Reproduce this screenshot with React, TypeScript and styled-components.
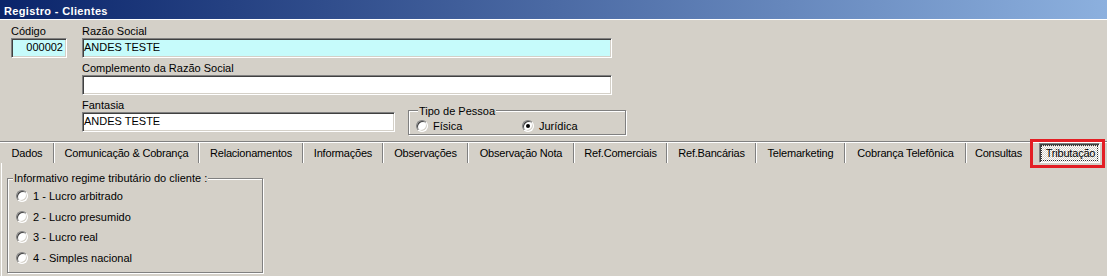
import React from "react";
import styled, { createGlobalStyle } from "styled-components";

const GlobalStyle = createGlobalStyle`
  html, body {
    margin: 0;
    padding: 0;
    background: #d4d0c8;
  }
  body {
    font-family: "Liberation Sans", Arial, sans-serif;
    font-size: 11px;
    color: #000;
  }
`;

const Window = styled.div`
  width: 1107px;
  height: 276px;
  overflow: hidden;
  background: #d4d0c8;
`;

const TitleBar = styled.div`
  height: 16px;
  padding: 3px 0 0 4px;
  border-bottom: 1px solid #fff;
  background: linear-gradient(to right, #0a246a, #8cb0de);
  color: #fff;
  font-weight: bold;
  letter-spacing: 0.35px;
  line-height: 16px;
  white-space: nowrap;
`;

const Header = styled.div`
  display: flex;
  gap: 15px;
  padding: 4px 0 6px 11px;
`;

const Column = styled.div<{ $w?: number }>`
  display: flex;
  flex-direction: column;
  gap: 3px;
  width: ${(p) => (p.$w ? `${p.$w}px` : "auto")};
`;

const Row = styled.div`
  display: flex;
  align-items: flex-start;
`;

const Field = styled.div`
  display: flex;
  flex-direction: column;
`;

const Label = styled.div`
  height: 14px;
  line-height: 14px;
  white-space: nowrap;
`;

const TextBox = styled.div<{ $w: number; $bg?: string; $right?: boolean }>`
  box-sizing: border-box;
  width: ${(p) => p.$w}px;
  height: 20px;
  padding: 0 ${(p) => (p.$right ? "3px" : "1px")} 0 1px;
  border: 1px solid;
  border-color: #808080 #fff #fff #808080;
  box-shadow: inset 1px 1px 0 #404040, inset -1px -1px 0 #d4d0c8;
  background: ${(p) => p.$bg ?? "#fff"};
  line-height: 16px;
  text-align: ${(p) => (p.$right ? "right" : "left")};
  white-space: nowrap;
  overflow: hidden;
`;

const GroupBox = styled.div<{ $w: number; $h: number; $mt?: number; $ml?: number }>`
  position: relative;
  box-sizing: border-box;
  width: ${(p) => p.$w}px;
  height: ${(p) => p.$h}px;
  margin-top: ${(p) => p.$mt ?? 0}px;
  margin-left: ${(p) => p.$ml ?? 0}px;
  border: 1px solid #808080;
  box-shadow: inset 1px 1px 0 #fff, 1px 1px 0 #fff;
`;

const Caption = styled.span<{ $top: number; $left: number }>`
  position: absolute;
  top: ${(p) => p.$top}px;
  left: ${(p) => p.$left}px;
  padding: 0 1px;
  background: #d4d0c8;
  line-height: 13px;
  white-space: nowrap;
`;

const PessoaOptions = styled.div`
  display: grid;
  grid-template-columns: 106px auto;
  padding: 9px 0 0 7px;
`;

const RegimeOptions = styled.div`
  display: flex;
  flex-direction: column;
  padding: 7px 0 0 8px;
`;

const Option = styled.div<{ $h: number }>`
  display: flex;
  align-items: center;
  gap: 5px;
  height: ${(p) => p.$h}px;
  white-space: nowrap;
`;

const RadioCircle = styled.span<{ $checked?: boolean }>`
  position: relative;
  flex: none;
  box-sizing: border-box;
  width: 12px;
  height: 12px;
  border-radius: 50%;
  border: 1px solid;
  border-color: #808080 #fff #fff #808080;
  box-shadow: inset 1px 1px 0 #404040, inset -1px -1px 0 #d4d0c8;
  background: #fff;

  &::after {
    content: "";
    display: ${(p) => (p.$checked ? "block" : "none")};
    position: absolute;
    left: 3px;
    top: 3px;
    width: 4px;
    height: 4px;
    border-radius: 50%;
    background: #000;
  }
`;

const TabBar = styled.div`
  display: flex;
  height: 20px;
  padding: 1px 0 0 1px;
  border-top: 1px solid #808080;
  box-shadow: inset 0 1px 0 #fff;
`;

const Tab = styled.div<{ $w: number }>`
  flex: none;
  width: ${(p) => p.$w}px;
  height: 20px;
  line-height: 20px;
  letter-spacing: -0.2px;
  text-align: center;
  white-space: nowrap;
`;

const TabSeparator = styled.div`
  flex: none;
  width: 2px;
  height: 20px;
  box-shadow: inset 1px 0 0 #808080, inset -1px 0 0 #fff;
`;

const ActiveTab = styled.div`
  position: relative;
  flex: none;
  display: flex;
  box-sizing: border-box;
  width: 61px;
  height: 20px;
  margin-left: 7px;
  border: 1px solid;
  border-color: #808080 #fff #fff #808080;
  box-shadow: inset 1px 1px 0 #404040;
  background-color: #fff;
  background-image: repeating-conic-gradient(#d4d0c8 0 25%, #fff 0 50%);
  background-size: 2px 2px;
`;

const FocusFrame = styled.span`
  flex: 1;
  margin: 1px;
  border: 1px dotted #303030;
  padding-left: 2px;
  line-height: 14px;
  letter-spacing: -0.2px;
  text-align: center;
  white-space: nowrap;
`;

const Highlight = styled.span`
  position: absolute;
  left: -10px;
  top: -5px;
  right: -6px;
  bottom: -6px;
  border: 3px solid #e31e24;
  pointer-events: none;
`;

const Page = styled.div`
  margin-left: 1px;
  padding: 15px 0 0 5px;
  border-left: 1px solid #fff;
  height: 200px;
`;

const tabs: { label: string; w: number }[] = [
  { label: "Dados", w: 52 },
  { label: "Comunicação & Cobrança", w: 143 },
  { label: "Relacionamentos", w: 102 },
  { label: "Informações", w: 78 },
  { label: "Observações", w: 83 },
  { label: "Observação Nota", w: 104 },
  { label: "Ref.Comerciais", w: 91 },
  { label: "Ref.Bancárias", w: 87 },
  { label: "Telemarketing", w: 87 },
  { label: "Cobrança Telefônica", w: 119 },
  { label: "Consultas", w: 63 },
];

const regimes = [
  "1 - Lucro arbitrado",
  "2 - Lucro presumido",
  "3 - Lucro real",
  "4 - Simples nacional",
];

export default function App() {
  return (
    <Window>
      <GlobalStyle />
      <TitleBar>Registro - Clientes</TitleBar>

      <Header>
        <Column $w={56}>
          <Field>
            <Label>Código</Label>
            <TextBox $w={56} $bg="#c6fbfb" $right>
              000002
            </TextBox>
          </Field>
        </Column>
        <Column>
          <Field>
            <Label>Razão Social</Label>
            <TextBox $w={530} $bg="#c6fbfb">
              ANDES TESTE
            </TextBox>
          </Field>
          <Field>
            <Label>Complemento da Razão Social</Label>
            <TextBox $w={530} />
          </Field>
          <Row>
            <Field>
              <Label>Fantasia</Label>
              <TextBox $w={313}>ANDES TESTE</TextBox>
            </Field>
            <GroupBox $w={218} $h={25} $mt={12} $ml={13}>
              <Caption $top={-6} $left={9}>
                Tipo de Pessoa
              </Caption>
              <PessoaOptions>
                <Option $h={12}>
                  <RadioCircle />
                  Física
                </Option>
                <Option $h={12}>
                  <RadioCircle $checked />
                  Jurídica
                </Option>
              </PessoaOptions>
            </GroupBox>
          </Row>
        </Column>
      </Header>

      <TabBar>
        {tabs.map((t) => (
          <React.Fragment key={t.label}>
            <Tab $w={t.w}>{t.label}</Tab>
            <TabSeparator />
          </React.Fragment>
        ))}
        <ActiveTab>
          <FocusFrame>Tributação</FocusFrame>
          <Highlight />
        </ActiveTab>
      </TabBar>

      <Page>
        <GroupBox $w={256} $h={95}>
          <Caption $top={-7} $left={5}>
            Informativo regime tributário do cliente :
          </Caption>
          <RegimeOptions>
            {regimes.map((r) => (
              <Option key={r} $h={20.5}>
                <RadioCircle />
                {r}
              </Option>
            ))}
          </RegimeOptions>
        </GroupBox>
      </Page>
    </Window>
  );
}
